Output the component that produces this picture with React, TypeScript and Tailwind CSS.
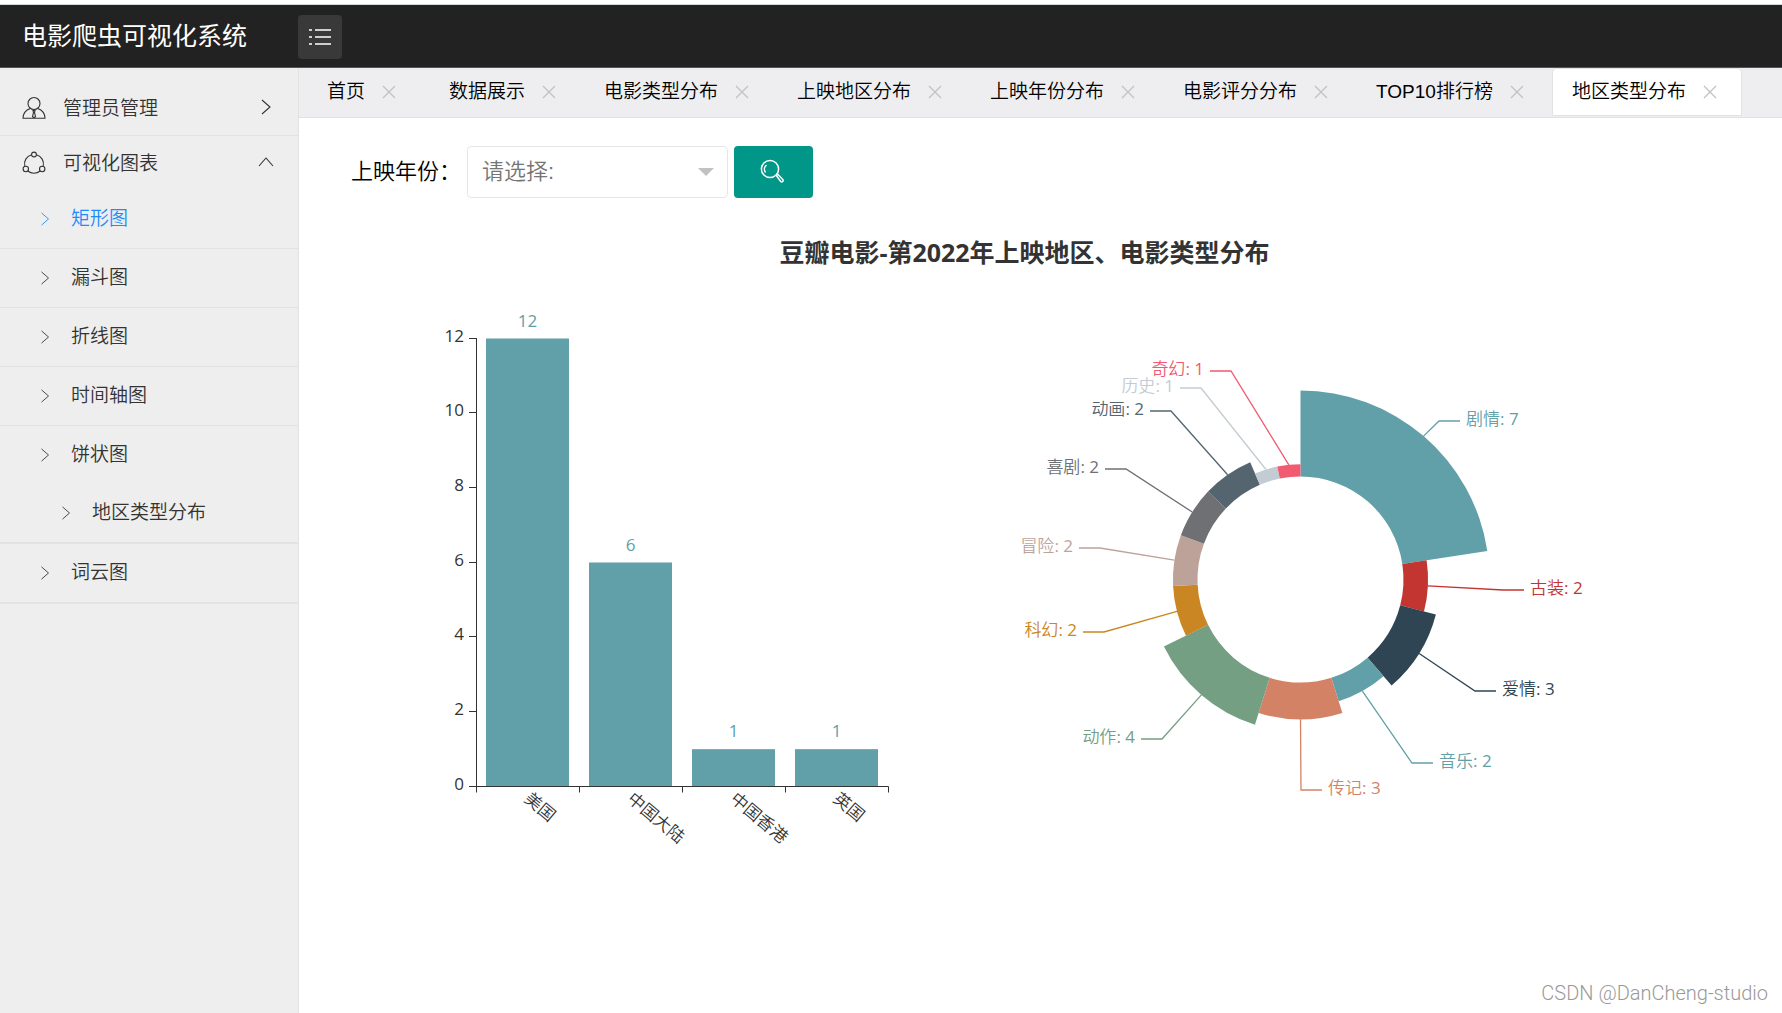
import { useState } from 'react'

const tabs = ['首页', '数据展示', '电影类型分布', '上映地区分布', '上映年份分布', '电影评分分布', 'TOP10排行榜', '地区类型分布']

const chartLinks = [
  { label: '矩形图' },
  { label: '漏斗图' },
  { label: '折线图' },
  { label: '时间轴图' },
  { label: '饼状图', children: ['地区类型分布'] },
  { label: '词云图' },
]

const regions = [
  { name: '美国', value: 12 },
  { name: '中国大陆', value: 6 },
  { name: '中国香港', value: 1 },
  { name: '英国', value: 1 },
]

// x, y: where the leader line bends
const genres = [
  { name: '剧情', value: 7, color: '#61a0a8', x: 1140, y: 132 },
  { name: '古装', value: 2, color: '#c23531', x: 1204, y: 301 },
  { name: '爱情', value: 3, color: '#2f4554', x: 1176, y: 402 },
  { name: '音乐', value: 2, color: '#61a0a8', x: 1113, y: 474 },
  { name: '传记', value: 3, color: '#d48265', x: 1002, y: 501 },
  { name: '动作', value: 4, color: '#749f83', x: 863, y: 450 },
  { name: '科幻', value: 2, color: '#ca8622', x: 805, y: 343 },
  { name: '冒险', value: 2, color: '#bda29a', x: 801, y: 259 },
  { name: '喜剧', value: 2, color: '#6e7074', x: 827, y: 180 },
  { name: '动画', value: 2, color: '#546570', x: 872, y: 122 },
  { name: '历史', value: 1, color: '#c4ccd3', x: 902, y: 99 },
  { name: '奇幻', value: 1, color: '#f05b72', x: 932, y: 82 },
]

function Chevron({ className, up = false }: { className: string; up?: boolean }) {
  return (
    <svg className={className} viewBox="0 0 16 16" fill="none" stroke="currentColor" strokeWidth="1.1">
      {up ? <path d="M1 12 8 4l7 8" /> : <path d="m4 1 8 7-8 7" />}
    </svg>
  )
}

function UserIcon() {
  return (
    <svg className="w-6 h-6 shrink-0" viewBox="0 0 24 24" fill="none" stroke="currentColor" strokeWidth="1.1">
      <circle cx="12" cy="7.5" r="6" />
      <path d="M8.2 12.6C4 14 1.2 17.5 1 22.3h22c-.2-4.8-3-8.3-7.2-9.7M11 14.5h2l-.5 2 1 4-1.5 1.5-1.5-1.5 1-4z" />
    </svg>
  )
}

function ShareIcon() {
  return (
    <svg className="w-6 h-6 shrink-0" viewBox="0 0 24 24" fill="none" stroke="currentColor" strokeWidth="1.1">
      <circle cx="12" cy="3.5" r="2.4" />
      <circle cx="3.8" cy="18" r="2.7" />
      <circle cx="20.2" cy="18" r="2.7" />
      <path d="M9.6 3.7A9.6 9.6 0 0 0 2.8 15.4M14.4 3.7A9.6 9.6 0 0 1 21.2 15.4M5.8 20A9.6 9.6 0 0 0 18.2 20" />
    </svg>
  )
}

function BarChart() {
  const left = 177
  const base = 497.5
  const unit = 448 / 12
  const band = 103
  return (
    <g fontSize="17">
      {regions.map((r, i) => {
        const mid = left + band * (i + 0.5)
        return (
          <g key={r.name}>
            <rect x={mid - 41.5} y={base - r.value * unit} width="83" height={r.value * unit} fill="#61a0a8" />
            <text x={mid} y={base - r.value * unit - 12} textAnchor="middle" fontWeight="400" fill="#61a0a8">{r.value}</text>
            <text transform={`translate(${mid} ${base + 9}) rotate(40)`} dominantBaseline="central" fill="#333">{r.name}</text>
          </g>
        )
      })}
      {[0, 2, 4, 6, 8, 10, 12].map((v) => (
        <g key={v}>
          <path d={`M${left - 7} ${Math.round(base - v * unit) - 0.5}h7`} stroke="#333" />
          <text x={left - 12} y={base - v * unit + 3} textAnchor="end" fontWeight="400" fill="#333">{v}</text>
        </g>
      ))}
      <path
        d={`M${left + 0.5} 49V${base + 6}M${left + 0.5} ${base}h${band * 4}v6m${-band} -6v6m${-band} -6v6m${-band} -6v6`}
        stroke="#333"
        fill="none"
      />
    </g>
  )
}

function RoseChart() {
  const cx = 1001.5
  const cy = 290.5
  const inner = 103
  const outer = 189
  const total = genres.reduce((sum, g) => sum + g.value, 0)
  const point = (r: number, a: number) => `${cx + r * Math.sin(a)} ${cy - r * Math.cos(a)}`
  let angle = 0

  return (
    <g fontSize="17">
      {genres.map((g) => {
        const start = angle
        const end = start + (g.value / total) * Math.PI * 2
        angle = end
        const r = inner + ((outer - inner) * g.value) / 7
        const right = g.x > 1000
        const dir = right ? 1 : -1
        return (
          <g key={g.name}>
            <path
              d={`M${point(inner, start)}L${point(r, start)}A${r} ${r} 0 0 1 ${point(r, end)}L${point(inner, end)}A${inner} ${inner} 0 0 0 ${point(inner, start)}`}
              fill={g.color}
            />
            <path d={`M${point(r, (start + end) / 2)}L${g.x} ${g.y}h${21 * dir}`} stroke={g.color} strokeWidth="1.3" fill="none" />
            <text x={g.x + 27 * dir} y={g.y + 4} textAnchor={right ? 'start' : 'end'} fill={g.color}>
              {g.name}<tspan fontWeight="400">: {g.value}</tspan>
            </text>
          </g>
        )
      })}
    </g>
  )
}

export default function App() {
  const [activeTab, setActiveTab] = useState('地区类型分布')
  const [activeChart, setActiveChart] = useState('矩形图')
  const [chartsOpen, setChartsOpen] = useState(true)

  return (
    <div className="min-h-screen flex flex-col bg-white text-black font-[350] font-['Liberation_Sans','Noto_Sans_CJK_SC',sans-serif]">
      <header className="mt-1 h-16 shrink-0 flex items-center border-t border-b border-t-gray-300 border-b-[#555] bg-[#222] text-white">
        <h1 className="w-[298px] pl-[22px] text-[25px] leading-8 font-normal">电影爬虫可视化系统</h1>
        <button aria-label="菜单" className="mt-0.5 w-11 h-11 flex items-center justify-center rounded bg-[#393939]">
          <svg className="w-6 h-6" viewBox="0 0 24 24" fill="none" stroke="currentColor" strokeWidth="1.6">
            <path d="M7 5h16M7 12h16M7 19h16M1 5h3M1 12h3M1 19h3" />
          </svg>
        </button>
      </header>

      <div className="flex flex-1">
        {/* Sidebar */}
        <nav className="w-[299px] shrink-0 border-r border-[#e2e2e2] bg-[#eee] text-[#333] text-[19px] leading-6">
          <button className="w-full h-[68px] pt-3 pl-[22px] pr-6 flex items-center gap-[17px] border-b border-[#e2e2e2]">
            <UserIcon />
            <span className="pt-0.5">管理员管理</span>
            <Chevron className="w-4 h-4 ml-auto mb-0.5" />
          </button>
          <button className="w-full h-[54px] pl-[22px] pr-6 flex items-center gap-[17px]" onClick={() => setChartsOpen(!chartsOpen)}>
            <ShareIcon />
            <span className="pt-0.5">可视化图表</span>
            <Chevron className="w-4 h-4 ml-auto mb-0.5" up={chartsOpen} />
          </button>
          {chartsOpen && (
            <ul className="border-b border-[#e2e2e2]">
              {chartLinks.map((item) => (
                <li key={item.label} className="border-b border-[#e2e2e2]">
                  <a
                    href="#"
                    onClick={() => setActiveChart(item.label)}
                    className={`h-[58px] pl-[38px] flex items-center gap-[19px] ${activeChart === item.label ? 'text-[#1e8cfa]' : ''}`}
                  >
                    <Chevron className="w-3.5 h-3.5 opacity-90" />
                    {item.label}
                  </a>
                  {item.children?.map((child) => (
                    <a key={child} href="#" className="h-[59px] pl-[59px] flex items-center gap-[19px] border-b border-[#e2e2e2]">
                      <Chevron className="w-3.5 h-3.5 opacity-90" />
                      {child}
                    </a>
                  ))}
                </li>
              ))}
            </ul>
          )}
        </nav>

        <main className="flex-1 min-w-0 flex flex-col">
          {/* Tabs */}
          <div className="h-[50px] pl-2 flex gap-[3px] border-b border-[#e2e2e2] bg-[#eeeef0]">
            {tabs.map((tab) => (
              <div
                key={tab}
                className={`h-12 min-w-[119px] pl-[19px] pr-[23px] flex items-center gap-4 whitespace-nowrap rounded-t border text-[19px] leading-6 ${
                  tab === activeTab ? 'bg-white border-[#e2e2e2]' : 'border-transparent'
                }`}
              >
                <button onClick={() => setActiveTab(tab)}>{tab}</button>
                <button aria-label={`关闭${tab}`} className="text-[#c2c2c2]">
                  <svg className="w-4 h-4" viewBox="0 0 16 16" fill="none" stroke="currentColor" strokeWidth="1.3">
                    <path d="m2 2 12 12M14 2 2 14" />
                  </svg>
                </button>
              </div>
            ))}
          </div>

          {/* Filter */}
          <form className="pt-7 pl-[52px] flex items-center text-[22px] leading-8">
            <label htmlFor="year" className="w-[116px]">上映年份：</label>
            <div className="relative w-[261px]">
              <select id="year" className="w-full h-[52px] px-3.5 appearance-none rounded-sm border border-[#e6e6e6] bg-white text-[#757575] font-[350]">
                <option>请选择:</option>
              </select>
              <svg className="absolute right-3.5 top-[22px] w-4 h-2 text-[#c2c2c2] pointer-events-none" viewBox="0 0 16 8" fill="currentColor">
                <path d="M0 0h16L8 8z" />
              </svg>
            </div>
            <button type="button" aria-label="搜索" className="ml-1.5 w-[79px] h-[52px] pr-1 pb-0.5 flex items-center justify-center rounded-sm bg-[#009688] text-white">
              <svg className="w-6 h-6" viewBox="0 0 24 24" fill="none" stroke="currentColor" strokeWidth="1.5">
                <circle cx="10" cy="10" r="8.6" />
                <path d="M5.5 13.5a5.5 5.5 0 0 1 1-7.5M16.2 16.5l1.5-1.2 5 5.2a1.3 1.3 0 0 1-2 2z" />
              </svg>
            </button>
          </form>

          {/* Charts */}
          <section className="font-['Open_Sans','Noto_Sans_CJK_SC',sans-serif]">
            <h2 className="pt-[38px] pr-8 text-center text-[25px] leading-8 font-bold text-[#333]">豆瓣电影-第2022年上映地区、电影类型分布</h2>
            <svg className="w-full mt-[21px]" viewBox="0 0 1483 560" role="img" aria-label="上映地区、电影类型分布">
              <BarChart />
              <RoseChart />
            </svg>
          </section>

          <footer className="mt-auto pr-3.5 pb-2 text-right text-[20px] leading-6 font-light text-[#999] font-['Roboto',sans-serif]">
            CSDN @DanCheng-studio
          </footer>
        </main>
      </div>
    </div>
  )
}
